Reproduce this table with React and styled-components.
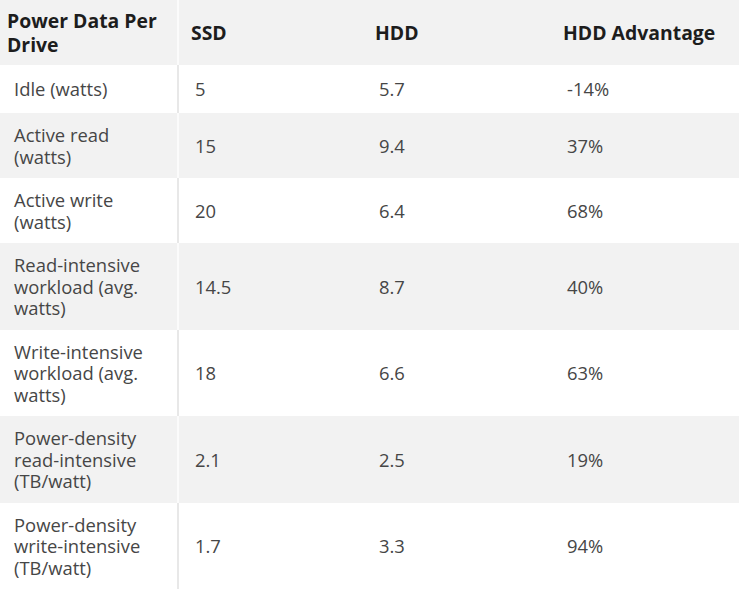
import styled, { createGlobalStyle } from 'styled-components';

const GlobalStyle = createGlobalStyle`
  html, body {
    margin: 0;
    padding: 0;
    background: #fff;
  }
  body {
    font-family: 'Open Sans', 'Noto Sans', sans-serif;
  }
`;

const Table = styled.table`
  width: 739px;
  border-collapse: collapse;
  table-layout: fixed;
`;

const Row = styled.tr`
  height: ${({ head }) => (head ? '65px' : '48px')};
  background-color: ${({ striped }) => (striped ? '#f2f2f2' : '#fff')};
`;

const HeadCell = styled.th`
  padding: 8px 8px 8px ${({ first }) => (first ? '7px' : '12px')};
  text-align: left;
  vertical-align: middle;
  font-size: 19.4px;
  font-weight: 700;
  line-height: 24px;
  color: #1d1d1d;
  border-right: ${({ first }) => (first ? '2px solid #fbfbfb' : 'none')};
`;

const Cell = styled.td`
  padding: 11px 12px 11px ${({ first }) => (first ? '14px' : '16px')};
  vertical-align: middle;
  font-size: 18.4px;
  line-height: 21.5px;
  color: #464646;
  border-right: ${({ first, striped }) =>
    first ? `2px solid ${striped ? '#fbfbfb' : '#e8e8e8'}` : 'none'};
`;

const rows = [
  ['Idle (watts)', '5', '5.7', '-14%'],
  ['Active read (watts)', '15', '9.4', '37%'],
  ['Active write (watts)', '20', '6.4', '68%'],
  ['Read-intensive workload (avg. watts)', '14.5', '8.7', '40%'],
  ['Write-intensive workload (avg. watts)', '18', '6.6', '63%'],
  ['Power-density read-intensive (TB/watt)', '2.1', '2.5', '19%'],
  ['Power-density write-intensive (TB/watt)', '1.7', '3.3', '94%'],
];

export default function App() {
  return (
    <>
      <GlobalStyle />
      <Table>
        <colgroup>
          <col style={{ width: 178 }} />
          <col style={{ width: 185 }} />
          <col style={{ width: 188 }} />
          <col style={{ width: 188 }} />
        </colgroup>
        <thead>
          <Row head striped>
            <HeadCell first>Power Data Per Drive</HeadCell>
            <HeadCell>SSD</HeadCell>
            <HeadCell>HDD</HeadCell>
            <HeadCell>HDD Advantage</HeadCell>
          </Row>
        </thead>
        <tbody>
          {rows.map(([label, ssd, hdd, adv], i) => {
            const striped = i % 2 === 1;
            return (
              <Row key={label} striped={striped}>
                <Cell first striped={striped}>{label}</Cell>
                <Cell>{ssd}</Cell>
                <Cell>{hdd}</Cell>
                <Cell>{adv}</Cell>
              </Row>
            );
          })}
        </tbody>
      </Table>
    </>
  );
}
